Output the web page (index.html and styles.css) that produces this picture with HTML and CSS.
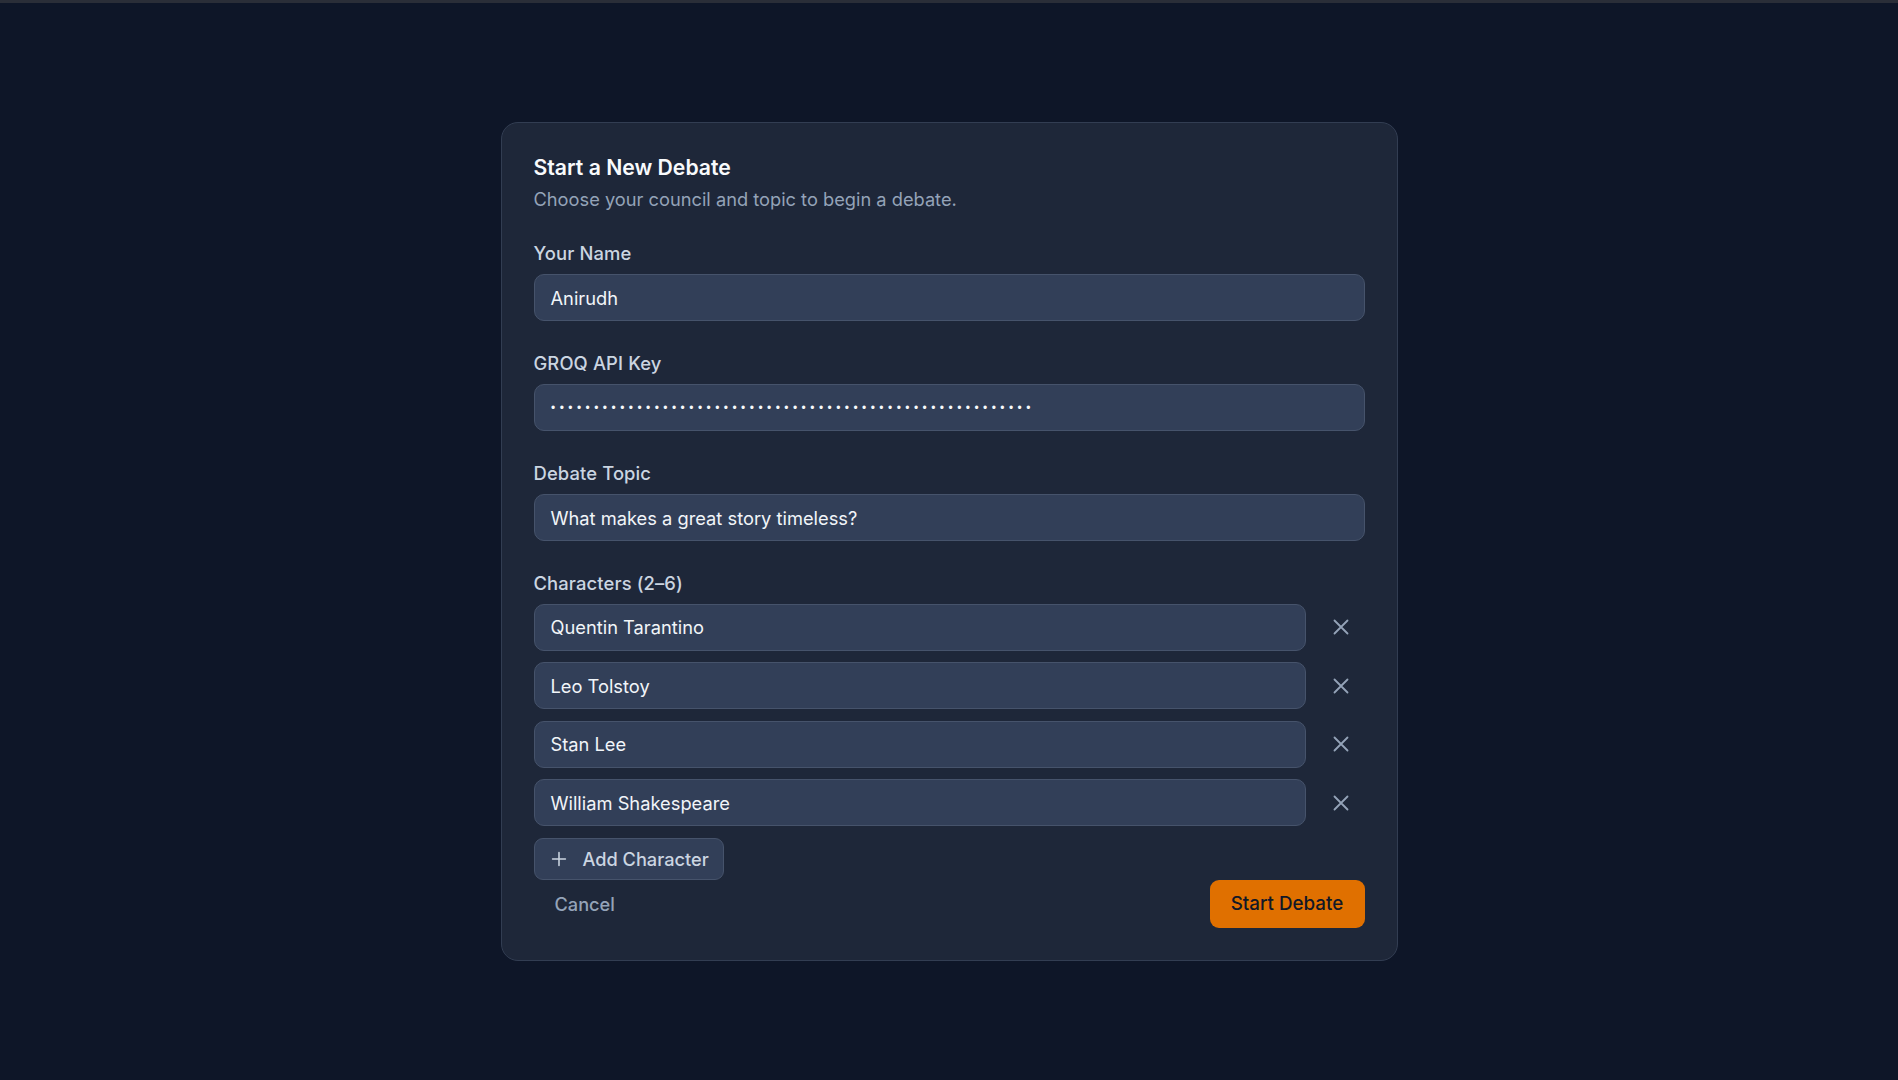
FILE: index.html
```html
<!DOCTYPE html>
<html lang="en">
<head>
<meta charset="utf-8">
<title>Start a New Debate</title>
<link rel="stylesheet" href="styles.css">
</head>
<body>
<div class="topstrip"></div>
<main class="stage">
  <section class="modal">
    <header class="modal-head">
      <h2 class="title">Start a New Debate</h2>
      <p class="subtitle">Choose your council and topic to begin a debate.</p>
    </header>

    <div class="field">
      <label class="label">Your Name</label>
      <div class="input">Anirudh</div>
    </div>

    <div class="field">
      <label class="label">GROQ API Key</label>
      <div class="input"><span class="dots">••••••••••••••••••••••••••••••••••••••••••••••••••••••••</span></div>
    </div>

    <div class="field">
      <label class="label">Debate Topic</label>
      <div class="input">What makes a great story timeless?</div>
    </div>

    <div class="field chars">
      <label class="label">Characters (2–6)</label>
      <div class="char-list">
        <div class="char-row">
          <div class="input">Quentin Tarantino</div>
          <button class="remove" aria-label="Remove"><svg viewBox="0 0 24 24" width="26" height="26"><path d="M18 6 6 18M6 6l12 12"/></svg></button>
        </div>
        <div class="char-row">
          <div class="input">Leo Tolstoy</div>
          <button class="remove" aria-label="Remove"><svg viewBox="0 0 24 24" width="26" height="26"><path d="M18 6 6 18M6 6l12 12"/></svg></button>
        </div>
        <div class="char-row">
          <div class="input">Stan Lee</div>
          <button class="remove" aria-label="Remove"><svg viewBox="0 0 24 24" width="26" height="26"><path d="M18 6 6 18M6 6l12 12"/></svg></button>
        </div>
        <div class="char-row">
          <div class="input">William Shakespeare</div>
          <button class="remove" aria-label="Remove"><svg viewBox="0 0 24 24" width="26" height="26"><path d="M18 6 6 18M6 6l12 12"/></svg></button>
        </div>
        <div class="add-row">
          <button class="add-btn"><svg viewBox="0 0 24 24" width="22" height="22"><path d="M5 12h14M12 5v14"/></svg><span>Add Character</span></button>
        </div>
      </div>
    </div>

    <footer class="modal-foot">
      <button class="cancel">Cancel</button>
      <button class="start">Start Debate</button>
    </footer>
  </section>
</main>
</body>
</html>
```

FILE: styles.css
```css
* { box-sizing: border-box; }
html, body { margin: 0; padding: 0; }
body {
  background: #0e1628;
  font-family: Inter, "Noto Sans", sans-serif;
  color: #f1f5f9;
  height: 1080px;
  overflow: hidden;
  display: flex;
  flex-direction: column;
}
.topstrip {
  height: 3px;
  background: #2a2e38;
  flex: none;
}
.stage {
  flex: 1;
  display: flex;
  align-items: center;
  justify-content: center;
}
.modal {
  width: 897px;
  background: #1e2739;
  border: 1px solid #323d52;
  border-radius: 17px;
  padding: 30px 32px 32px;
  display: flex;
  flex-direction: column;
}
.modal-head { margin-bottom: 30.5px; }
.title {
  margin: 0;
  font-size: 21.2px;
  line-height: 28px;
  font-weight: 600;
  color: #f8fafc;
}
.subtitle {
  margin: 6px 0 0;
  font-size: 18.25px;
  line-height: 24px;
  color: #94a3b8;
}
.field { margin-bottom: 30.5px; display: flex; flex-direction: column; }
.field.chars { margin-bottom: 0; }
.label {
  font-size: 18.4px;
  line-height: 22px;
  font-weight: 500;
  letter-spacing: 0.12px;
  color: #cbd5e1;
  margin-bottom: 10.5px;
}
.chars .label { margin-bottom: 10px; }
.input {
  height: 47px;
  background: #323f58;
  border: 1px solid #46536b;
  border-radius: 10px;
  padding: 0 16px;
  display: flex;
  align-items: center;
  font-size: 18.3px;
  color: #f1f5f9;
}
.dots {
  font-family: "Liberation Mono", monospace;
  font-size: 12px;
  letter-spacing: 1.44px;
  color: #f8fafc;
  padding-top: 3px;
  margin-left: -1px;
}
.char-list { display: flex; flex-direction: column; gap: 11.5px; }
.char-row { display: flex; gap: 12px; }
.char-row .input { flex: 1; }
.remove {
  width: 47px;
  flex: none;
  background: none;
  border: 0;
  padding: 0;
  display: flex;
  align-items: center;
  justify-content: center;
  cursor: pointer;
}
.remove svg, .add-btn svg {
  fill: none;
  stroke: #94a3b8;
  stroke-width: 1.7;
  stroke-linecap: round;
}
.add-row { display: flex; }
.add-btn {
  height: 42px;
  display: flex;
  align-items: center;
  gap: 13px;
  padding: 0 14px 0 13px;
  background: #323f58;
  border: 1px solid #46536b;
  border-radius: 9px;
  font-family: inherit;
  font-size: 18.2px;
  font-weight: 500;
  color: #cbd5e1;
}
.add-btn svg { stroke: #cbd5e1; }
.modal-foot {
  display: flex;
  justify-content: space-between;
  align-items: center;
}
.cancel {
  height: 48px;
  padding: 0 21px;
  background: none;
  border: 0;
  font-family: inherit;
  font-size: 18.2px;
  font-weight: 500;
  color: #94a3b8;
}
.start {
  height: 48px;
  width: 155px;
  padding: 0;
  background: #e07000;
  border: 0;
  border-radius: 9px;
  font-family: inherit;
  font-size: 18.8px;
  font-weight: 500;
  color: #111827;
}
```
